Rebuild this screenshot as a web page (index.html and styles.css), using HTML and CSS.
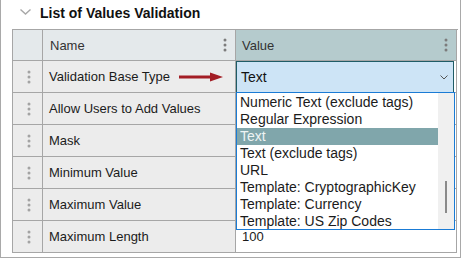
FILE: index.html
```
<!DOCTYPE html>
<html lang="en">

<head>
  <meta charset="UTF-8">
  <title>List of Values Validation</title>
  <link rel="stylesheet" href="styles.css">
</head>

<body>

  <div class="panel">
    <div class="panel-title">
      <svg class="chevron" width="11" height="6" viewBox="0 0 11 6"><path d="M0.5 0.5 L5.5 5 L10.5 0.5" fill="none" stroke="#a8a8a8" stroke-width="1.4"/></svg>
      <span>List of Values Validation</span>
    </div>

    <div class="grid">
      <!-- header -->
      <div class="cell head"></div>
      <div class="cell head name-head">
        <span>Name</span>
        <svg class="dots dark" width="4" height="14" viewBox="0 0 4 14"><circle cx="2" cy="2" r="1.5"/><circle cx="2" cy="7" r="1.5"/><circle cx="2" cy="12" r="1.5"/></svg>
      </div>
      <div class="cell head value-head">
        <span>Value</span>
        <svg class="dots dark" width="4" height="14" viewBox="0 0 4 14"><circle cx="2" cy="2" r="1.5"/><circle cx="2" cy="7" r="1.5"/><circle cx="2" cy="12" r="1.5"/></svg>
      </div>

      <!-- row 1 -->
      <div class="cell handle"><svg class="dots" width="4" height="14" viewBox="0 0 4 14"><circle cx="2" cy="2" r="1.5"/><circle cx="2" cy="7" r="1.5"/><circle cx="2" cy="12" r="1.5"/></svg></div>
      <div class="cell name">
        Validation Base Type
        <svg class="arrow" width="44" height="10" viewBox="0 0 44 10"><path d="M0 3.5 H31 V0.5 L44 5 L31 9.5 V6.5 H0 Z" fill="#a31d24"/></svg>
      </div>
      <div class="cell value editing">
        <div class="select">
          <span>Text</span>
          <svg width="8" height="5" viewBox="0 0 8 5"><path d="M0.5 0.5 L4 4 L7.5 0.5" fill="none" stroke="#555" stroke-width="1"/></svg>
        </div>
      </div>

      <!-- row 2 -->
      <div class="cell handle"><svg class="dots" width="4" height="14" viewBox="0 0 4 14"><circle cx="2" cy="2" r="1.5"/><circle cx="2" cy="7" r="1.5"/><circle cx="2" cy="12" r="1.5"/></svg></div>
      <div class="cell name">Allow Users to Add Values</div>
      <div class="cell value"></div>

      <!-- row 3 -->
      <div class="cell handle"><svg class="dots" width="4" height="14" viewBox="0 0 4 14"><circle cx="2" cy="2" r="1.5"/><circle cx="2" cy="7" r="1.5"/><circle cx="2" cy="12" r="1.5"/></svg></div>
      <div class="cell name">Mask</div>
      <div class="cell value"></div>

      <!-- row 4 -->
      <div class="cell handle"><svg class="dots" width="4" height="14" viewBox="0 0 4 14"><circle cx="2" cy="2" r="1.5"/><circle cx="2" cy="7" r="1.5"/><circle cx="2" cy="12" r="1.5"/></svg></div>
      <div class="cell name">Minimum Value</div>
      <div class="cell value"></div>

      <!-- row 5 -->
      <div class="cell handle"><svg class="dots" width="4" height="14" viewBox="0 0 4 14"><circle cx="2" cy="2" r="1.5"/><circle cx="2" cy="7" r="1.5"/><circle cx="2" cy="12" r="1.5"/></svg></div>
      <div class="cell name">Maximum Value</div>
      <div class="cell value"></div>

      <!-- row 6 -->
      <div class="cell handle"><svg class="dots" width="4" height="14" viewBox="0 0 4 14"><circle cx="2" cy="2" r="1.5"/><circle cx="2" cy="7" r="1.5"/><circle cx="2" cy="12" r="1.5"/></svg></div>
      <div class="cell name">Maximum Length</div>
      <div class="cell value last">100</div>
    </div>

    <!-- open dropdown of the Validation Base Type editor -->
    <div class="dropdown">
      <ul class="options">
        <li>Numeric Text (exclude tags)</li>
        <li>Regular Expression</li>
        <li class="selected">Text</li>
        <li>Text (exclude tags)</li>
        <li>URL</li>
        <li>Template: CryptographicKey</li>
        <li>Template: Currency</li>
        <li>Template: US Zip Codes</li>
      </ul>
      <div class="scrollbar"><div class="thumb"></div></div>
    </div>
  </div>

</body>

</html>
```

FILE: styles.css
```
/* Basic body styling */
body {
  margin: 0;
  padding: 0;
  font-family: "Liberation Sans", Arial, sans-serif;
  font-size: 13px;
  color: #1b1b1b;
  background: #fff;
}

/* Outer frame */
.panel {
  position: relative;
  width: 461px;
  height: 258px;
  box-sizing: border-box;
  border: 1px solid #a9a9a9;
  border-top: none;
}

.panel-title {
  display: flex;
  align-items: center;
  height: 25px;
  padding-left: 19px;
  margin-bottom: 4px;
  font-size: 14px;
  font-weight: bold;
  color: #111;
}

.panel-title .chevron {
  margin-right: 9px;
  margin-top: -1px;
}

/* Property grid */
.grid {
  display: grid;
  grid-template-columns: 30px 193px 221px;
  grid-auto-rows: 32px;
  grid-template-rows: 31px;
  margin-left: 11px;
  width: 445px;
  border-top: 1px solid #a6a6a6;
  border-left: 1px solid #a6a6a6;
}

.cell {
  display: flex;
  align-items: center;
  box-sizing: border-box;
  border-right: 1px solid #a6a6a6;
  border-bottom: 1px solid #a6a6a6;
  background: #ececec;
  white-space: nowrap;
}

.head {
  background: #e4e9eb;
  color: #333;
}

.name-head {
  justify-content: space-between;
  padding: 0 8px 0 7px;
}

.value-head {
  justify-content: space-between;
  background: #b5cbcd;
  padding: 0 8px 0 6px;
}

.dots {
  fill: #a3a3a3;
}

.dots.dark {
  fill: #7c7c7c;
}

.handle {
  justify-content: center;
  padding-left: 3px;
}

.name {
  padding-left: 6px;
}

.name .arrow {
  margin-left: 9px;
}

.value {
  background: #fff;
  padding-left: 6px;
}

.value.editing {
  padding: 0 2px 0 0;
  align-items: stretch;
}

.select {
  flex: 1;
  display: flex;
  align-items: center;
  justify-content: space-between;
  box-sizing: border-box;
  margin-bottom: -1px;
  padding: 0 5px 0 4px;
  border: 1px solid #1f5c66;
  background: #cde4f6;
  font-size: 14px;
  color: #111;
}

/* Dropdown list over the grid */
.dropdown {
  position: absolute;
  left: 235px;
  top: 92px;
  width: 219px;
  height: 138px;
  box-sizing: border-box;
  display: flex;
  border: 1px solid #1a7bd5;
  background: #fff;
  overflow: hidden;
}

.options {
  flex: 1;
  list-style: none;
  margin: 0;
  padding: 1px 0 0 0;
  font-size: 14px;
}

.options li {
  height: 17px;
  line-height: 17px;
  padding-left: 3px;
  white-space: nowrap;
}

.options li.selected {
  background: #80a6ab;
  color: #eef4f4;
}

.scrollbar {
  width: 16px;
  background: #f0f0f0;
  position: relative;
}

.thumb {
  position: absolute;
  left: 7px;
  top: 88px;
  width: 2px;
  height: 32px;
  background: #8a8a8a;
}
```
